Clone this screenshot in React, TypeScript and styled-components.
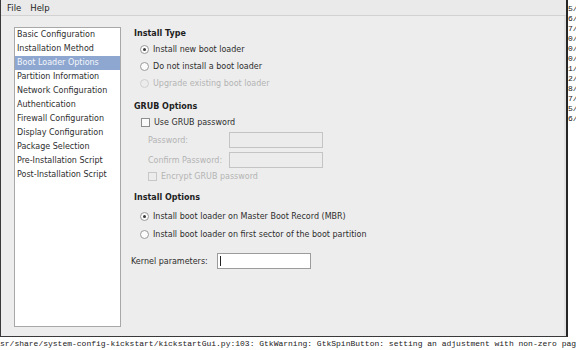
import React from 'react'
import styled, { createGlobalStyle } from 'styled-components'

const Global = createGlobalStyle`
  html, body { margin: 0; padding: 0; background: #fff; }
  body { font-family: "DejaVu Sans", "Liberation Sans", sans-serif; font-size: 8px; color: #2e2e2e; }
`

const Screen = styled.div`
  width: 576px;
  height: 350px;
  overflow: hidden;
  display: flex;
  flex-direction: column;
  background: #fff;
`

const TopArea = styled.div`
  display: flex;
  height: 337px;
`

const Window = styled.div`
  width: 565px;
  height: 336px;
  background: #ededed;
  border-left: 1px solid #3a3a3a;
  border-right: 2px solid #262626;
  border-bottom: 1px solid #3a3a3a;
  display: flex;
  flex-direction: column;
`

const MenuBar = styled.div`
  height: 15px;
  display: flex;
  align-items: center;
  gap: 9px;
  padding-left: 6px;
  background: #eaeaea;
  border-bottom: 1px solid #d2d2d2;
  font-size: 8.5px;
  color: #1e1e1e;
`

const Body = styled.div`
  flex: 1;
  display: flex;
  padding: 11px 0 9px 13px;
  border-right: 2px solid #e2e2e2;
`

const NavList = styled.ul`
  list-style: none;
  margin: 0;
  padding: 0;
  width: 105px;
  background: #fff;
  border: 1px solid #a8a8a8;
`

const NavItem = styled.li<{ $active?: boolean }>`
  height: 14px;
  line-height: 14px;
  padding-left: 2px;
  white-space: nowrap;
  background: ${p => (p.$active ? '#8ea7d1' : 'transparent')};
  color: ${p => (p.$active ? '#f4f6fa' : '#2e2e2e')};
`

const Panel = styled.div`
  flex: 1;
  display: flex;
  flex-direction: column;
  padding-left: 9px;
`

const Heading = styled.div<{ $gap?: number }>`
  height: 14px;
  line-height: 14px;
  font-weight: bold;
  color: #1e1e1e;
  margin-top: ${p => p.$gap ?? 0}px;
  padding-left: 4px;
`

const OptionRow = styled.label<{ $indent?: number; $disabled?: boolean; $gap?: number }>`
  height: 17px;
  display: flex;
  align-items: center;
  gap: 4px;
  padding-left: ${p => p.$indent ?? 10}px;
  margin-top: ${p => p.$gap ?? 0}px;
  color: ${p => (p.$disabled ? '#b4b4b4' : '#2e2e2e')};
  white-space: nowrap;
`

const Radio = styled.span<{ $on?: boolean; $disabled?: boolean }>`
  width: 7px;
  height: 7px;
  border-radius: 50%;
  border: 1px solid ${p => (p.$disabled ? '#d0d0d0' : '#9a9a9a')};
  background: ${p => (p.$disabled ? '#ececec' : '#fbfbfb')};
  display: flex;
  align-items: center;
  justify-content: center;
  flex-shrink: 0;
  &::after {
    content: '';
    display: ${p => (p.$on ? 'block' : 'none')};
    width: 3px;
    height: 3px;
    border-radius: 50%;
    background: #3a3a3a;
  }
`

const Check = styled.span<{ $disabled?: boolean }>`
  width: 7px;
  height: 7px;
  border: 1px solid ${p => (p.$disabled ? '#c8c8c8' : '#8e8e8e')};
  background: ${p => (p.$disabled ? '#ececec' : '#fbfbfb')};
  flex-shrink: 0;
`

const FieldRow = styled.div<{ $indent: number; $labelWidth: number; $gap?: number; $disabled?: boolean }>`
  height: 16px;
  display: flex;
  align-items: center;
  margin-top: ${p => p.$gap ?? 0}px;
  padding-left: ${p => p.$indent}px;
  color: ${p => (p.$disabled ? '#b4b4b4' : '#2e2e2e')};
  & > span {
    width: ${p => p.$labelWidth}px;
    white-space: nowrap;
  }
`

const TextBox = styled.div<{ $disabled?: boolean; $caret?: boolean }>`
  width: 94px;
  height: 16px;
  box-sizing: border-box;
  border: 1px solid ${p => (p.$disabled ? '#c4c4c4' : '#9c9c9c')};
  background: ${p => (p.$disabled ? '#ececec' : '#fff')};
  position: relative;
  &::before {
    content: '';
    display: ${p => (p.$caret ? 'block' : 'none')};
    position: absolute;
    left: 2px;
    top: 2px;
    width: 1px;
    height: 10px;
    background: #222;
  }
`

const RightStrip = styled.div`
  width: 8px;
  overflow: hidden;
  padding-top: 4px;
  font-family: "Liberation Mono", "DejaVu Sans Mono", monospace;
  font-size: 8px;
  line-height: 10px;
  color: #1a1a1a;
  white-space: pre;
`

const TermLine = styled.div`
  height: 13px;
  padding-top: 1px;
  font-family: "Liberation Mono", "DejaVu Sans Mono", monospace;
  font-size: 8px;
  line-height: 11px;
  color: #1a1a1a;
  white-space: pre;
  overflow: hidden;
`

const navItems = [
  'Basic Configuration',
  'Installation Method',
  'Boot Loader Options',
  'Partition Information',
  'Network Configuration',
  'Authentication',
  'Firewall Configuration',
  'Display Configuration',
  'Package Selection',
  'Pre-Installation Script',
  'Post-Installation Script',
]

const stripChars = ['5/', '6/', '7/', '0/', '0/', '0/', '1/', '2/', '8/', '7/', '5/', '6/']

export default function App(): React.ReactElement {
  return (
    <>
      <Global />
      <Screen>
        <TopArea>
          <Window>
            <MenuBar>
              <span>File</span>
              <span>Help</span>
            </MenuBar>
            <Body>
              <NavList>
                {navItems.map(item => (
                  <NavItem key={item} $active={item === 'Boot Loader Options'}>{item}</NavItem>
                ))}
              </NavList>
              <Panel>
                <Heading>Install Type</Heading>
                <OptionRow><Radio $on />Install new boot loader</OptionRow>
                <OptionRow><Radio />Do not install a boot loader</OptionRow>
                <OptionRow $disabled><Radio $disabled />Upgrade existing boot loader</OptionRow>

                <Heading $gap={8}>GRUB Options</Heading>
                <OptionRow $indent={11}><Check />Use GRUB password</OptionRow>
                <FieldRow $indent={18} $labelWidth={81} $gap={1} $disabled>
                  <span>Password:</span>
                  <TextBox $disabled />
                </FieldRow>
                <FieldRow $indent={18} $labelWidth={81} $gap={4} $disabled>
                  <span>Confirm Password:</span>
                  <TextBox $disabled />
                </FieldRow>
                <OptionRow $indent={18} $disabled><Check $disabled />Encrypt GRUB password</OptionRow>

                <Heading $gap={6}>Install Options</Heading>
                <OptionRow $gap={3}><Radio $on />Install boot loader on Master Boot Record (MBR)</OptionRow>
                <OptionRow $gap={1}><Radio />Install boot loader on first sector of the boot partition</OptionRow>

                <FieldRow $indent={1} $labelWidth={86} $gap={10}>
                  <span>Kernel parameters:</span>
                  <TextBox $caret />
                </FieldRow>
              </Panel>
            </Body>
          </Window>
          <RightStrip>{stripChars.join('\n')}</RightStrip>
        </TopArea>
        <TermLine>sr/share/system-config-kickstart/kickstartGui.py:103: GtkWarning: GtkSpinButton: setting an adjustment with non-zero pag</TermLine>
      </Screen>
    </>
  )
}
